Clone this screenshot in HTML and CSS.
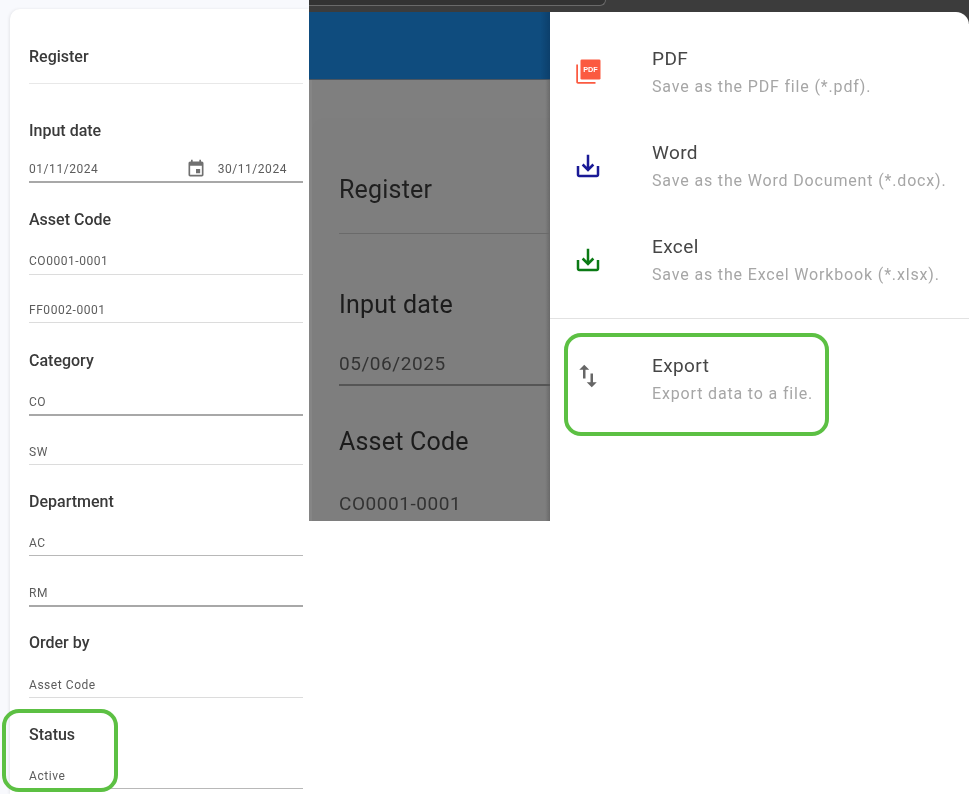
FILE: index.html
```html
<!DOCTYPE html>
<html lang="en">
<head>
<meta charset="utf-8">
<title>Register export</title>
<link rel="stylesheet" href="styles.css">
</head>
<body>
<div class="page">
  <aside class="filter-pane">
    <div class="filter-card">
      <h2 class="filter-title">Register</h2>
      <hr class="rule">
      <h3 class="filter-label first">Input date</h3>
      <div class="field date-field strong">
        <span class="value">01/11/2024</span>
        <svg class="cal" viewBox="0 0 24 24"><path d="M17 12h-5v5h5v-5zM16 1v2H8V1H6v2H5c-1.11 0-1.99.9-1.99 2L3 19c0 1.1.89 2 2 2h14c1.1 0 2-.9 2-2V5c0-1.1-.9-2-2-2h-1V1h-2zm3 18H5V8h14v11z"/></svg>
        <span class="value">30/11/2024</span>
      </div>
      <h3 class="filter-label">Asset Code</h3>
      <div class="field lead"><span class="value">CO0001-0001</span></div>
      <div class="field"><span class="value">FF0002-0001</span></div>
      <h3 class="filter-label wide">Category</h3>
      <div class="field strong tight"><span class="value">CO</span></div>
      <div class="field roomy"><span class="value">SW</span></div>
      <h3 class="filter-label">Department</h3>
      <div class="field mid tight"><span class="value">AC</span></div>
      <div class="field strong roomier"><span class="value">RM</span></div>
      <h3 class="filter-label snug">Order by</h3>
      <div class="field"><span class="value">Asset Code</span></div>
      <h3 class="filter-label">Status</h3>
      <div class="field mid tight"><span class="value">Active</span></div>
      <div class="callout status-callout"></div>
    </div>
  </aside>

  <main class="stage">
    <div class="browser-bar"><div class="tab-edge"></div></div>
    <div class="stage-row">
      <section class="backdrop">
        <div class="appbar"></div>
        <div class="scrim">
          <div class="dim-card">
            <h2 class="dim-title">Register</h2>
            <hr class="dim-rule">
            <h3 class="dim-label first">Input date</h3>
            <div class="dim-field strong">05/06/2025</div>
            <h3 class="dim-label">Asset Code</h3>
            <div class="dim-field">CO0001-0001</div>
          </div>
        </div>
      </section>

      <nav class="menu">
        <div class="menu-item">
          <svg class="menu-icon pdf" viewBox="0 0 24 24">
            <rect x="6" y="2" width="16" height="16" rx="1"/>
            <path d="M4 6H2.6v14c0 .8.6 1.4 1.4 1.4h14V20H4V6z"/>
            <text x="14" y="12.2" text-anchor="middle" class="pdf-text">PDF</text>
          </svg>
          <div class="menu-text"><div class="menu-title">PDF</div><div class="menu-sub">Save as the PDF file (*.pdf).</div></div>
        </div>
        <div class="menu-item">
          <svg class="menu-icon word" viewBox="0 0 24 24"><path d="M19 12v7H5v-7H3v7c0 1.1.9 2 2 2h14c1.1 0 2-.9 2-2v-7h-2zm-6 .67l2.59-2.58L17 11.5l-5 5-5-5 1.41-1.41L11 12.67V3h2z"/></svg>
          <div class="menu-text"><div class="menu-title">Word</div><div class="menu-sub">Save as the Word Document (*.docx).</div></div>
        </div>
        <div class="menu-item">
          <svg class="menu-icon excel" viewBox="0 0 24 24"><path d="M19 12v7H5v-7H3v7c0 1.1.9 2 2 2h14c1.1 0 2-.9 2-2v-7h-2zm-6 .67l2.59-2.58L17 11.5l-5 5-5-5 1.41-1.41L11 12.67V3h2z"/></svg>
          <div class="menu-text"><div class="menu-title">Excel</div><div class="menu-sub">Save as the Excel Workbook (*.xlsx).</div></div>
        </div>
        <hr class="menu-rule">
        <div class="menu-item export">
          <svg class="menu-icon swap" viewBox="0 0 24 24"><path d="M16 17.01V10h-2v7.01h-3L15 21l4-3.99h-3zM9 3L5 6.99h3V14h2V6.99h3L9 3z"/></svg>
          <div class="menu-text"><div class="menu-title">Export</div><div class="menu-sub">Export data to a file.</div></div>
          <div class="callout export-callout"></div>
        </div>
      </nav>
    </div>
  </main>
</div>
</body>
</html>
```

FILE: styles.css
```css
* { box-sizing: border-box; }
html, body { margin: 0; padding: 0; background: #fff; }
body { width: 969px; height: 794px; overflow: hidden; font-family: Roboto, "Liberation Sans", sans-serif; }
h2, h3, hr { margin: 0; }

.page { display: grid; grid-template-columns: 309px 660px; width: 969px; height: 794px; filter: blur(.45px); }

/* Left filter panel */
.filter-pane { background: #f8f9fd; padding: 9px 0 0 10px; height: 794px; overflow: hidden; }
.filter-card { position: relative; background: #fff; height: 785px; padding: 34px 6px 0 19px; border-radius: 10px 0 0 0; box-shadow: -1px 0 3px rgba(0, 0, 0, .08); }
.filter-title { font-size: 16px; font-weight: 500; line-height: 28px; color: #3a3a3a; margin-bottom: 12px; }
.rule { border: 0; border-top: 1px solid #e8e8e8; }
.filter-label { font-size: 16px; font-weight: 500; line-height: 26px; color: #3a3a3a; margin-top: 24px; }
.filter-label.first { margin-top: 33px; margin-bottom: -2px; line-height: 28px; }
.filter-label.wide { margin-top: 25px; }
.filter-label.snug { margin-top: 23px; }
.field { display: flex; align-items: center; padding: 27px 0 4px; border-bottom: 1px solid #dcdcdc; }
.filter-label + .field { padding-top: 21px; }
.filter-label + .field.tight { padding-top: 20px; }
.filter-label + .field.lead { padding: 20px 0 5px; }
.field.roomy { padding-top: 28px; }
.field.roomier { padding-top: 29px; }
.field.strong { border-bottom: 2px solid #a8a8a8; }
.field.mid { border-bottom: 1px solid #b8b8b8; }
.filter-label + .date-field { padding: 18px 0 4px; justify-content: space-between; }
.value { font-size: 12px; line-height: 16px; letter-spacing: .55px; color: #5c5c5c; }
.date-field .value:first-child { flex: 1; }
.date-field .value:last-child { margin-left: 12px; margin-right: 16px; }
.cal { width: 20px; height: 20px; fill: #707070; margin: -2px 0 -2px; }

/* Callouts drawn over the screenshot */
.callout { position: absolute; border: 4px solid #5cc043; border-radius: 17px; pointer-events: none; }
.status-callout { left: -8px; top: 700px; width: 116px; height: 83px; }

/* Middle dimmed page */
.stage { display: flex; flex-direction: column; height: 794px; background: linear-gradient(#3c3c3c 24px, #fff 24px); }
.browser-bar { height: 12px; background: #3c3c3c; }
.tab-edge { width: 297px; height: 6px; background: #333; border-bottom: 1px solid #6a6a6a; border-right: 1px solid #6a6a6a; border-bottom-right-radius: 8px; }
.stage-row { display: grid; grid-template-columns: 241px 419px; flex: 1; }
.backdrop { height: 509px; display: flex; flex-direction: column; overflow: hidden; }
.appbar { height: 68px; background: linear-gradient(90deg, #0f4c7e 96%, #0c3f6b); border-bottom: 1px solid #4a5560; }
.scrim { flex: 1; padding: 38px 0 0 3px; background: linear-gradient(90deg, #858585 3px, #7f7f7f 3px, #7f7f7f 98%, #6a6a6a); overflow: hidden; }
.dim-card { padding: 54px 0 0 27px; height: 500px; border-radius: 12px 0 0 0; background: rgba(0, 0, 0, .008); }
.dim-title { font-size: 25px; font-weight: 400; line-height: 36px; color: #1f1f1f; letter-spacing: .2px; margin-bottom: 25px; }
.dim-rule { border: 0; border-top: 1px solid #6a6a6a; }
.dim-label { font-size: 25px; font-weight: 400; line-height: 36px; color: #1c1c1c; letter-spacing: .2px; margin: 38px 0 -2px; }
.dim-label.first { margin-top: 53px; }
.dim-field { font-size: 19px; line-height: 26px; color: #333; letter-spacing: .55px; padding-top: 33px; }
.dim-field.strong { padding: 30px 0 7px; border-bottom: 2px solid #555; }

/* Right export menu */
.menu { background: #fff; border-top-right-radius: 13px; height: 782px; padding-top: 12px; }
.menu-item { position: relative; display: flex; align-items: flex-start; height: 94px; padding: 23px 0 0 23px; }
.menu-icon { width: 30px; height: 30px; flex: none; margin-top: 10px; }
.menu-text { margin-left: 49px; }
.menu-title { font-size: 19px; line-height: 24px; color: #464646; letter-spacing: .4px; }
.menu-sub { font-size: 16px; line-height: 22px; color: #a6a6a6; letter-spacing: .84px; margin-top: 5px; }
.pdf { fill: #fb5a40; }
.pdf-text { font-family: "Liberation Sans", sans-serif; font-size: 5.8px; font-weight: 700; fill: #fff; }
.word { fill: #1a1a96; }
.excel { fill: #0b7a14; }
.swap { fill: #666; }
.menu-rule { border: 0; border-top: 1px solid #e2e2e2; margin-top: 12px; }
.export { height: auto; padding-top: 35px; }
.export .menu-icon { margin-top: 7px; }
.export-callout { left: 14px; top: 14px; width: 265px; height: 103px; }
```
